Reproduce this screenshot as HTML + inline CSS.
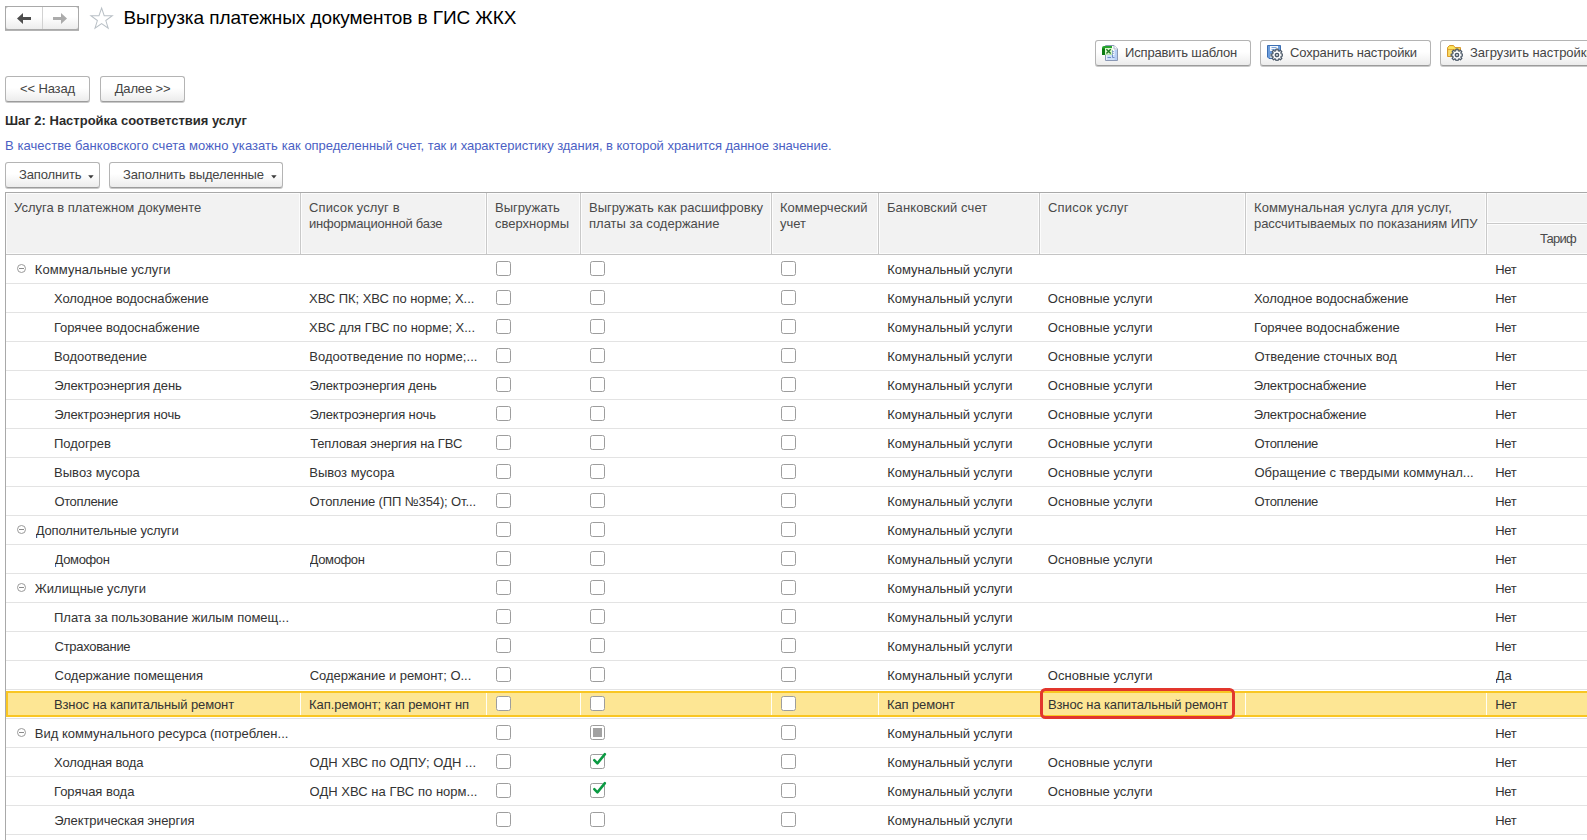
<!DOCTYPE html>
<html lang="ru"><head><meta charset="utf-8"><title>Выгрузка платежных документов в ГИС ЖКХ</title>
<style>
html,body{margin:0;padding:0;background:#fff;}
body{width:1587px;height:840px;overflow:hidden;position:relative;font-family:"Liberation Sans",sans-serif;font-size:13px;color:#333;}
.abs{position:absolute}
.btn{position:absolute;box-sizing:border-box;height:26px;border:1px solid #b4b4b4;border-bottom-color:#9c9c9c;border-radius:3px;background:linear-gradient(#ffffff 0%,#ffffff 45%,#ececec 100%);box-shadow:0 1px 0 #c9c9c9;color:#444;font-size:13px;letter-spacing:-0.15px;line-height:24px;white-space:nowrap;text-align:center}
.ic{position:absolute;left:6px;top:4px}
.dd{position:absolute;top:12.2px;width:6px;height:4px}
.title{position:absolute;left:123.5px;top:7px;font-size:19px;letter-spacing:-0.08px;line-height:22px;color:#000;white-space:nowrap}
.step{position:absolute;left:5px;top:113px;font-weight:bold;font-size:13px;line-height:16px;color:#2b2b2b;white-space:nowrap}
.hint{position:absolute;left:5px;top:138px;font-size:13px;line-height:16px;color:#4b5fc4;white-space:nowrap}
.tbl{position:absolute;left:6px;top:192px;width:1600px;height:660px;border-top:1px solid #a9a9a9;box-sizing:border-box}
.lb{position:absolute;left:5px;top:192px;width:1px;height:660px;background:#a9a9a9;z-index:5}
.hdr{position:absolute;left:0;top:0;width:1600px;height:61px;background:#f2f2f2;border-bottom:1px solid #c4c4c4}
.hc{position:absolute;top:0;height:61px;box-sizing:border-box;border-left:1px solid #c9c9c9;box-shadow:inset 1px 0 0 #fcfcfc,inset -1px 0 0 #fcfcfc,inset 0 1px 0 #fcfcfc,inset 0 -1px 0 #fcfcfc;padding:7px 0 0 8px;font-size:13px;line-height:16px;color:#4a4a4a;white-space:nowrap}
.row{position:absolute;left:5px;width:1600px;height:28px;border-bottom:1px solid #e3e3e3}
.row .c{position:absolute;top:0;height:28px;line-height:29px;white-space:nowrap;overflow:hidden;color:#333;font-size:13px}
.cb{position:absolute;top:6px;width:13px;height:13px;border:1px solid #9d9d9d;border-radius:2.5px;background:#fff;display:block}
.cb .sq{position:absolute;left:2px;top:2px;width:9px;height:9px;background:#a2a2a2;display:block}
.cb .ck{position:absolute;left:-1px;top:-3px}
.tg{position:absolute;left:12px;top:9px;width:7px;height:7px;border:1px solid #9a9a9a;border-radius:50%;display:block}
.tg:after{content:"";position:absolute;left:1px;top:3px;width:5px;height:1px;background:#8a8a8a}
.selbg{position:absolute;left:1px;top:1px;width:1600px;height:22px;border:2px solid #f9c623;background:#fde694;display:block}
.vs{position:absolute;top:3px;width:1px;height:22px;background:#fffef6;display:block}
.red{position:absolute;left:1034.5px;top:-2px;width:189.5px;height:25px;border:3px solid #e2362d;border-radius:5.5px;display:block;box-sizing:content-box}
</style></head><body>

<!-- nav -->
<div class="abs" style="left:5px;top:6px;width:74px;height:24px;box-sizing:border-box;border:1px solid #a9a9a9;background:#bdbdbd;box-shadow:0 1px 0 #b3b3b3"><div style="position:absolute;left:0;top:0;right:0;bottom:0;border-radius:2.5px;background:linear-gradient(#ffffff 0%,#ffffff 45%,#ededed 100%)"></div></div>
<div class="abs" style="left:42px;top:7px;width:1px;height:22px;background:#d2d2d2"></div>
<svg class="abs" style="left:16px;top:12px" width="16" height="13" viewBox="0 0 16 13"><path d="M1 6.5 L7 1 L7 5 L15 5 L15 8 L7 8 L7 12 Z" fill="#4d4d4d"/></svg>
<svg class="abs" style="left:52px;top:12px" width="16" height="13" viewBox="0 0 16 13"><path d="M15 6.5 L9 1 L9 5 L1 5 L1 8 L9 8 L9 12 Z" fill="#ababab"/></svg>
<svg class="abs" style="left:88.9px;top:5.9px" width="25.2" height="24.1" viewBox="0 0 25 24"><path d="M12.5 2 L15.1 9.6 L23.2 9.7 L16.7 14.5 L19.1 22.2 L12.5 17.6 L5.9 22.2 L8.3 14.5 L1.8 9.7 L9.9 9.6 Z" fill="#fff" stroke="#b9c0c6" stroke-width="1"/></svg>
<div class="title">Выгрузка платежных документов в ГИС ЖКХ</div>

<!-- top right buttons -->
<div class="btn" style="left:1095px;top:40px;width:156px;text-align:left;padding-left:29px"><svg class="ic" width="16" height="16" viewBox="0 0 16 16">
<path d="M3.5 0.5 L12 0.5 L15.5 4 L15.5 15.5 L3.5 15.5 Z" fill="#fff" stroke="#8a98b5" stroke-width="1"/>
<path d="M12 0.5 L12 4 L15.5 4" fill="#fff" stroke="#a9b4c9" stroke-width="1"/>
<rect x="4.5" y="10" width="10" height="5" fill="#cfe0fa"/>
<rect x="12.5" y="5" width="2.5" height="10" fill="#b7cff5"/>
<path d="M10.5 5 L10.5 12.5 L12.5 12.5 M5.5 12.5 L9 12.5" stroke="#6f8fc6" stroke-width="1" fill="none"/>
<path d="M0 10 L0 3 Q0 1 2 1 L10 1 L10 10 Z" fill="#27a32f"/>
<rect x="0" y="3.6" width="3" height="6.4" fill="#0b7c12"/>
<rect x="3" y="3" width="7.4" height="6.8" fill="#dcf8cd"/>
<path d="M4.4 4.3 L8.7 8.5 M8.7 4.3 L4.4 8.5" stroke="#1f7d22" stroke-width="1.35" fill="none"/>
<rect x="10.6" y="6" width="1" height="1" fill="#5577b8"/><rect x="10.6" y="7.8" width="1" height="1" fill="#5577b8"/>
</svg>Исправить шаблон</div>
<div class="btn" style="left:1260px;top:40px;width:171px;text-align:left;padding-left:29px"><svg class="ic" width="16" height="16" viewBox="0 0 16 16">
<path d="M0.5 0.5 L13.5 0.5 L13.5 13.5 L2 13.5 L0.5 12 Z" fill="#6c9ddc" stroke="#3c6fb3" stroke-width="1"/>
<rect x="3" y="1" width="8" height="5" fill="#f4f8fd"/>
<path d="M4.5 2.5 L9.5 2.5 M4.5 4.5 L9.5 4.5" stroke="#7da6dc" stroke-width="1"/>
<rect x="3" y="9" width="6" height="4" fill="#c8d4e0"/>
<path d="M8.77 5.77 L9.03 4.18 L10.97 4.18 L11.23 5.77 L12.12 6.14 L13.43 5.20 L14.80 6.57 L13.86 7.88 L14.23 8.77 L15.82 9.03 L15.82 10.97 L14.23 11.23 L13.86 12.12 L14.80 13.43 L13.43 14.80 L12.12 13.86 L11.23 14.23 L10.97 15.82 L9.03 15.82 L8.77 14.23 L7.88 13.86 L6.57 14.80 L5.20 13.43 L6.14 12.12 L5.77 11.23 L4.18 10.97 L4.18 9.03 L5.77 8.77 L6.14 7.88 L5.20 6.57 L6.57 5.20 L7.88 6.14 Z" fill="#fdfdfd" stroke="#4a5766" stroke-width="1.25" stroke-linejoin="round"/><circle cx="10" cy="10" r="1.7" fill="#d9dcdf" stroke="#4a5766" stroke-width="1.3"/></svg>Сохранить настройки</div>
<div class="btn" style="left:1440px;top:40px;width:172px;text-align:left;padding-left:29px;letter-spacing:-.05px"><svg class="ic" width="16" height="16" viewBox="0 0 16 16">
<path d="M0.5 11.5 L0.5 2.5 L2.5 0.5 L6.5 0.5 L8 2.5 L13.5 2.5 L13.5 11.5 Z" fill="#f6cf4a" stroke="#d99a2b" stroke-width="1"/>
<path d="M1 4.5 L13 4.5" stroke="#e0a536" stroke-width="1"/>
<path d="M1.5 2.8 L2.8 1.3 L6.2 1.3 L7.4 2.9 L12.8 3.2 L12.8 4 L1.5 4 Z" fill="#fbe45e"/>
<rect x="1.5" y="5.2" width="11.5" height="5.8" fill="#f8dc6e"/>
<path d="M8.77 5.77 L9.03 4.18 L10.97 4.18 L11.23 5.77 L12.12 6.14 L13.43 5.20 L14.80 6.57 L13.86 7.88 L14.23 8.77 L15.82 9.03 L15.82 10.97 L14.23 11.23 L13.86 12.12 L14.80 13.43 L13.43 14.80 L12.12 13.86 L11.23 14.23 L10.97 15.82 L9.03 15.82 L8.77 14.23 L7.88 13.86 L6.57 14.80 L5.20 13.43 L6.14 12.12 L5.77 11.23 L4.18 10.97 L4.18 9.03 L5.77 8.77 L6.14 7.88 L5.20 6.57 L6.57 5.20 L7.88 6.14 Z" fill="#fdfdfd" stroke="#4a5766" stroke-width="1.25" stroke-linejoin="round"/><circle cx="10" cy="10" r="1.7" fill="#d9dcdf" stroke="#4a5766" stroke-width="1.3"/></svg>Загрузить настройки</div>

<div class="btn" style="left:5px;top:76px;width:85px">&lt;&lt; Назад</div>
<div class="btn" style="left:100px;top:76px;width:85px">Далее &gt;&gt;</div>

<div class="step">Шаг 2: Настройка соответствия услуг</div>
<div class="hint"><span style="letter-spacing:.07px">В качестве банковского счета можно указать как </span><span style="letter-spacing:-.035px">определенный счет, так и характеристику здания, в которой хранится данное значение.</span></div>

<div class="btn" style="left:5px;top:162px;width:95px;text-align:left;padding-left:13px">Заполнить<svg class="dd" style="left:82.3px" viewBox="0 0 6 4"><path d="M0.2 0.3 L5.6 0.3 L2.9 3.5 Z" fill="#3a3a3a"/></svg></div>
<div class="btn" style="left:109px;top:162px;width:174px;text-align:left;padding-left:13px">Заполнить выделенные<svg class="dd" style="left:160.8px" viewBox="0 0 6 4"><path d="M0.2 0.3 L5.6 0.3 L2.9 3.5 Z" fill="#3a3a3a"/></svg></div>

<div class="tbl">
 <div class="hdr">
  <div class="hc" style="left:0;width:294px;border-left:none">Услуга в платежном документе</div>
  <div class="hc" style="left:294px;width:186px"><span style="letter-spacing:.12px">Список услуг в</span><br><span style="letter-spacing:-.22px">информационной базе</span></div>
  <div class="hc" style="left:480px;width:94px">Выгружать<br>сверхнормы</div>
  <div class="hc" style="left:574px;width:191px">Выгружать как расшифровку<br>платы за содержание</div>
  <div class="hc" style="left:765px;width:107px">Коммерческий<br>учет</div>
  <div class="hc" style="left:872px;width:161px"><span style="letter-spacing:.09px">Банковский счет</span></div>
  <div class="hc" style="left:1033px;width:206px"><span style="letter-spacing:.17px">Список услуг</span></div>
  <div class="hc" style="left:1239px;width:241px"><span style="letter-spacing:.1px">Коммунальная услуга для услуг,</span><br><span style="letter-spacing:-.07px">рассчитываемых по показаниям ИПУ</span></div>
  <div class="hc" style="left:1480px;width:120px;height:31px;border-bottom:1px solid #c9c9c9"></div>
  <div class="hc" style="left:1480px;top:31px;width:120px;height:30px;padding:7px 0 0 53px;letter-spacing:-.8px">Тариф</div>
 </div>
</div>
<div class="row" style="top:255px">
<i class="tg"></i>
<span class="c" id="r0c1" style="left:29.80px;width:270px;letter-spacing:0.070px">Коммунальные услуги</span>

<i class="cb" style="left:491px"></i><i class="cb" style="left:585px"></i><i class="cb" style="left:776px"></i>
<span class="c" id="r0c6" style="left:882.15px;width:170px;letter-spacing:-0.010px">Комунальный услуги</span>


<span class="c" id="r0c9" style="left:1490.31px;width:110px;letter-spacing:-0.350px">Нет</span>
</div>
<div class="row" style="top:284px">
<span class="c" id="r1c1" style="left:49.06px;width:270px;letter-spacing:-0.128px">Холодное водоснабжение</span>
<span class="c" id="r1c2" style="left:304.06px;width:196px;letter-spacing:-0.044px">ХВС ПК; ХВС по норме; Х...</span>
<i class="cb" style="left:491px"></i><i class="cb" style="left:585px"></i><i class="cb" style="left:776px"></i>
<span class="c" id="r1c6" style="left:882.15px;width:170px;letter-spacing:-0.010px">Комунальный услуги</span>
<span class="c" id="r1c7" style="left:1042.82px;width:216px;letter-spacing:0.037px">Основные услуги</span>
<span class="c" id="r1c8" style="left:1248.97px;width:250px;letter-spacing:-0.129px">Холодное водоснабжение</span>
<span class="c" id="r1c9" style="left:1490.31px;width:110px;letter-spacing:-0.350px">Нет</span>
</div>
<div class="row" style="top:313px">
<span class="c" id="r2c1" style="left:49.00px;width:270px;letter-spacing:-0.048px">Горячее водоснабжение</span>
<span class="c" id="r2c2" style="left:304.06px;width:196px;letter-spacing:-0.016px">ХВС для ГВС по норме; Х...</span>
<i class="cb" style="left:491px"></i><i class="cb" style="left:585px"></i><i class="cb" style="left:776px"></i>
<span class="c" id="r2c6" style="left:882.15px;width:170px;letter-spacing:-0.010px">Комунальный услуги</span>
<span class="c" id="r2c7" style="left:1042.82px;width:216px;letter-spacing:0.037px">Основные услуги</span>
<span class="c" id="r2c8" style="left:1249.05px;width:250px;letter-spacing:-0.050px">Горячее водоснабжение</span>
<span class="c" id="r2c9" style="left:1490.31px;width:110px;letter-spacing:-0.350px">Нет</span>
</div>
<div class="row" style="top:342px">
<span class="c" id="r3c1" style="left:49.00px;width:270px;letter-spacing:-0.054px">Водоотведение</span>
<span class="c" id="r3c2" style="left:304.26px;width:196px;letter-spacing:0.036px">Водоотведение по норме;...</span>
<i class="cb" style="left:491px"></i><i class="cb" style="left:585px"></i><i class="cb" style="left:776px"></i>
<span class="c" id="r3c6" style="left:882.15px;width:170px;letter-spacing:-0.010px">Комунальный услуги</span>
<span class="c" id="r3c7" style="left:1042.82px;width:216px;letter-spacing:0.037px">Основные услуги</span>
<span class="c" id="r3c8" style="left:1249.42px;width:250px;letter-spacing:-0.071px">Отведение сточных вод</span>
<span class="c" id="r3c9" style="left:1490.31px;width:110px;letter-spacing:-0.350px">Нет</span>
</div>
<div class="row" style="top:371px">
<span class="c" id="r4c1" style="left:49.16px;width:270px;letter-spacing:-0.117px">Электроэнергия день</span>
<span class="c" id="r4c2" style="left:304.44px;width:196px;letter-spacing:-0.132px">Электроэнергия день</span>
<i class="cb" style="left:491px"></i><i class="cb" style="left:585px"></i><i class="cb" style="left:776px"></i>
<span class="c" id="r4c6" style="left:882.15px;width:170px;letter-spacing:-0.010px">Комунальный услуги</span>
<span class="c" id="r4c7" style="left:1042.82px;width:216px;letter-spacing:0.037px">Основные услуги</span>
<span class="c" id="r4c8" style="left:1248.75px;width:250px;letter-spacing:-0.200px">Электроснабжение</span>
<span class="c" id="r4c9" style="left:1490.31px;width:110px;letter-spacing:-0.350px">Нет</span>
</div>
<div class="row" style="top:400px">
<span class="c" id="r5c1" style="left:49.16px;width:270px;letter-spacing:-0.105px">Электроэнергия ночь</span>
<span class="c" id="r5c2" style="left:304.44px;width:196px;letter-spacing:-0.116px">Электроэнергия ночь</span>
<i class="cb" style="left:491px"></i><i class="cb" style="left:585px"></i><i class="cb" style="left:776px"></i>
<span class="c" id="r5c6" style="left:882.15px;width:170px;letter-spacing:-0.010px">Комунальный услуги</span>
<span class="c" id="r5c7" style="left:1042.82px;width:216px;letter-spacing:0.037px">Основные услуги</span>
<span class="c" id="r5c8" style="left:1248.75px;width:250px;letter-spacing:-0.200px">Электроснабжение</span>
<span class="c" id="r5c9" style="left:1490.31px;width:110px;letter-spacing:-0.350px">Нет</span>
</div>
<div class="row" style="top:429px">
<span class="c" id="r6c1" style="left:49.00px;width:270px;letter-spacing:-0.045px">Подогрев</span>
<span class="c" id="r6c2" style="left:305.15px;width:196px;letter-spacing:-0.115px">Тепловая энергия на ГВС</span>
<i class="cb" style="left:491px"></i><i class="cb" style="left:585px"></i><i class="cb" style="left:776px"></i>
<span class="c" id="r6c6" style="left:882.15px;width:170px;letter-spacing:-0.010px">Комунальный услуги</span>
<span class="c" id="r6c7" style="left:1042.82px;width:216px;letter-spacing:0.037px">Основные услуги</span>
<span class="c" id="r6c8" style="left:1249.42px;width:250px;letter-spacing:-0.350px">Отопление</span>
<span class="c" id="r6c9" style="left:1490.31px;width:110px;letter-spacing:-0.350px">Нет</span>
</div>
<div class="row" style="top:458px">
<span class="c" id="r7c1" style="left:49.00px;width:270px;letter-spacing:0.050px">Вывоз мусора</span>
<span class="c" id="r7c2" style="left:304.26px;width:196px;letter-spacing:-0.007px">Вывоз мусора</span>
<i class="cb" style="left:491px"></i><i class="cb" style="left:585px"></i><i class="cb" style="left:776px"></i>
<span class="c" id="r7c6" style="left:882.15px;width:170px;letter-spacing:-0.010px">Комунальный услуги</span>
<span class="c" id="r7c7" style="left:1042.82px;width:216px;letter-spacing:0.037px">Основные услуги</span>
<span class="c" id="r7c8" style="left:1249.42px;width:250px">Обращение с твердыми коммунал...</span>
<span class="c" id="r7c9" style="left:1490.31px;width:110px;letter-spacing:-0.350px">Нет</span>
</div>
<div class="row" style="top:487px">
<span class="c" id="r8c1" style="left:49.38px;width:270px;letter-spacing:-0.350px">Отопление</span>
<span class="c" id="r8c2" style="left:304.58px;width:196px;letter-spacing:-0.125px">Отопление (ПП №354); От...</span>
<i class="cb" style="left:491px"></i><i class="cb" style="left:585px"></i><i class="cb" style="left:776px"></i>
<span class="c" id="r8c6" style="left:882.15px;width:170px;letter-spacing:-0.010px">Комунальный услуги</span>
<span class="c" id="r8c7" style="left:1042.82px;width:216px;letter-spacing:0.037px">Основные услуги</span>
<span class="c" id="r8c8" style="left:1249.42px;width:250px;letter-spacing:-0.350px">Отопление</span>
<span class="c" id="r8c9" style="left:1490.31px;width:110px;letter-spacing:-0.350px">Нет</span>
</div>
<div class="row" style="top:516px">
<i class="tg"></i>
<span class="c" id="r9c1" style="left:30.65px;width:270px;letter-spacing:-0.118px">Дополнительные услуги</span>

<i class="cb" style="left:491px"></i><i class="cb" style="left:585px"></i><i class="cb" style="left:776px"></i>
<span class="c" id="r9c6" style="left:882.15px;width:170px;letter-spacing:-0.010px">Комунальный услуги</span>


<span class="c" id="r9c9" style="left:1490.31px;width:110px;letter-spacing:-0.350px">Нет</span>
</div>
<div class="row" style="top:545px">
<span class="c" id="r10c1" style="left:49.59px;width:270px;letter-spacing:-0.350px">Домофон</span>
<span class="c" id="r10c2" style="left:304.59px;width:196px;letter-spacing:-0.350px">Домофон</span>
<i class="cb" style="left:491px"></i><i class="cb" style="left:585px"></i><i class="cb" style="left:776px"></i>
<span class="c" id="r10c6" style="left:882.15px;width:170px;letter-spacing:-0.010px">Комунальный услуги</span>
<span class="c" id="r10c7" style="left:1042.82px;width:216px;letter-spacing:0.037px">Основные услуги</span>

<span class="c" id="r10c9" style="left:1490.31px;width:110px;letter-spacing:-0.350px">Нет</span>
</div>
<div class="row" style="top:574px">
<i class="tg"></i>
<span class="c" id="r11c1" style="left:29.82px;width:270px;letter-spacing:0.009px">Жилищные услуги</span>

<i class="cb" style="left:491px"></i><i class="cb" style="left:585px"></i><i class="cb" style="left:776px"></i>
<span class="c" id="r11c6" style="left:882.15px;width:170px;letter-spacing:-0.010px">Комунальный услуги</span>


<span class="c" id="r11c9" style="left:1490.31px;width:110px;letter-spacing:-0.350px">Нет</span>
</div>
<div class="row" style="top:603px">
<span class="c" id="r12c1" style="left:49.00px;width:270px;letter-spacing:-0.010px">Плата за пользование жилым помещ...</span>

<i class="cb" style="left:491px"></i><i class="cb" style="left:585px"></i><i class="cb" style="left:776px"></i>
<span class="c" id="r12c6" style="left:882.15px;width:170px;letter-spacing:-0.010px">Комунальный услуги</span>


<span class="c" id="r12c9" style="left:1490.31px;width:110px;letter-spacing:-0.350px">Нет</span>
</div>
<div class="row" style="top:632px">
<span class="c" id="r13c1" style="left:49.61px;width:270px;letter-spacing:-0.308px">Страхование</span>

<i class="cb" style="left:491px"></i><i class="cb" style="left:585px"></i><i class="cb" style="left:776px"></i>
<span class="c" id="r13c6" style="left:882.15px;width:170px;letter-spacing:-0.010px">Комунальный услуги</span>


<span class="c" id="r13c9" style="left:1490.31px;width:110px;letter-spacing:-0.350px">Нет</span>
</div>
<div class="row" style="top:661px">
<span class="c" id="r14c1" style="left:49.61px;width:270px;letter-spacing:-0.040px">Содержание помещения</span>
<span class="c" id="r14c2" style="left:304.69px;width:196px;letter-spacing:-0.033px">Содержание и ремонт; О...</span>
<i class="cb" style="left:491px"></i><i class="cb" style="left:585px"></i><i class="cb" style="left:776px"></i>
<span class="c" id="r14c6" style="left:882.15px;width:170px;letter-spacing:-0.010px">Комунальный услуги</span>
<span class="c" id="r14c7" style="left:1042.82px;width:216px;letter-spacing:0.037px">Основные услуги</span>

<span class="c" id="r14c9" style="left:1490.80px;width:110px">Да</span>
</div>
<div class="row" style="top:690px">
<i class="selbg"></i>
<span class="c" id="r15c1" style="left:48.97px;width:270px;letter-spacing:-0.119px">Взнос на капитальный ремонт</span>
<span class="c" id="r15c2" style="left:304.09px;width:196px;letter-spacing:-0.077px">Кап.ремонт; кап ремонт нп</span>
<i class="cb" style="left:491px"></i><i class="cb" style="left:585px"></i><i class="cb" style="left:776px"></i>
<span class="c" id="r15c6" style="left:882.00px;width:170px;letter-spacing:-0.130px">Кап ремонт</span>
<span class="c" id="r15c7" style="left:1042.96px;width:216px;letter-spacing:-0.126px">Взнос на капитальный ремонт</span>
<i class="red"></i>
<i class="vs" style="left:295px"></i>
<i class="vs" style="left:481px"></i>
<i class="vs" style="left:575px"></i>
<i class="vs" style="left:766px"></i>
<i class="vs" style="left:873px"></i>
<i class="vs" style="left:1240px"></i>
<i class="vs" style="left:1481px"></i>

<span class="c" id="r15c9" style="left:1490.31px;width:110px;letter-spacing:-0.350px">Нет</span>
</div>
<div class="row" style="top:719px">
<i class="tg"></i>
<span class="c" id="r16c1" style="left:29.80px;width:270px;letter-spacing:0.006px">Вид коммунального ресурса (потреблен...</span>

<i class="cb" style="left:491px"></i><i class="cb" style="left:585px"><b class="sq"></b></i><i class="cb" style="left:776px"></i>
<span class="c" id="r16c6" style="left:882.15px;width:170px;letter-spacing:-0.010px">Комунальный услуги</span>


<span class="c" id="r16c9" style="left:1490.31px;width:110px;letter-spacing:-0.350px">Нет</span>
</div>
<div class="row" style="top:748px">
<span class="c" id="r17c1" style="left:49.06px;width:270px;letter-spacing:-0.158px">Холодная вода</span>
<span class="c" id="r17c2" style="left:304.58px;width:196px;letter-spacing:0.063px">ОДН ХВС по ОДПУ; ОДН ...</span>
<i class="cb" style="left:491px"></i><i class="cb" style="left:585px"><svg class="ck" width="20" height="20" viewBox="0 0 20 20"><path d="M4.3 8.2 L7.4 11.4 L14.9 2.1" fill="none" stroke="#0a9a42" stroke-width="2.5" stroke-linecap="round" stroke-linejoin="round"/></svg></i><i class="cb" style="left:776px"></i>
<span class="c" id="r17c6" style="left:882.15px;width:170px;letter-spacing:-0.010px">Комунальный услуги</span>
<span class="c" id="r17c7" style="left:1042.82px;width:216px;letter-spacing:0.037px">Основные услуги</span>

<span class="c" id="r17c9" style="left:1490.31px;width:110px;letter-spacing:-0.350px">Нет</span>
</div>
<div class="row" style="top:777px">
<span class="c" id="r18c1" style="left:49.00px;width:270px;letter-spacing:-0.031px">Горячая вода</span>
<span class="c" id="r18c2" style="left:304.58px;width:196px;letter-spacing:0.032px">ОДН ХВС на ГВС по норм...</span>
<i class="cb" style="left:491px"></i><i class="cb" style="left:585px"><svg class="ck" width="20" height="20" viewBox="0 0 20 20"><path d="M4.3 8.2 L7.4 11.4 L14.9 2.1" fill="none" stroke="#0a9a42" stroke-width="2.5" stroke-linecap="round" stroke-linejoin="round"/></svg></i><i class="cb" style="left:776px"></i>
<span class="c" id="r18c6" style="left:882.15px;width:170px;letter-spacing:-0.010px">Комунальный услуги</span>
<span class="c" id="r18c7" style="left:1042.82px;width:216px;letter-spacing:0.037px">Основные услуги</span>

<span class="c" id="r18c9" style="left:1490.31px;width:110px;letter-spacing:-0.350px">Нет</span>
</div>
<div class="row" style="top:806px">
<span class="c" id="r19c1" style="left:49.16px;width:270px;letter-spacing:-0.070px">Электрическая энергия</span>

<i class="cb" style="left:491px"></i><i class="cb" style="left:585px"></i><i class="cb" style="left:776px"></i>
<span class="c" id="r19c6" style="left:882.15px;width:170px;letter-spacing:-0.010px">Комунальный услуги</span>


<span class="c" id="r19c9" style="left:1490.31px;width:110px;letter-spacing:-0.350px">Нет</span>
</div>
<div class="lb"></div>
</body></html>
